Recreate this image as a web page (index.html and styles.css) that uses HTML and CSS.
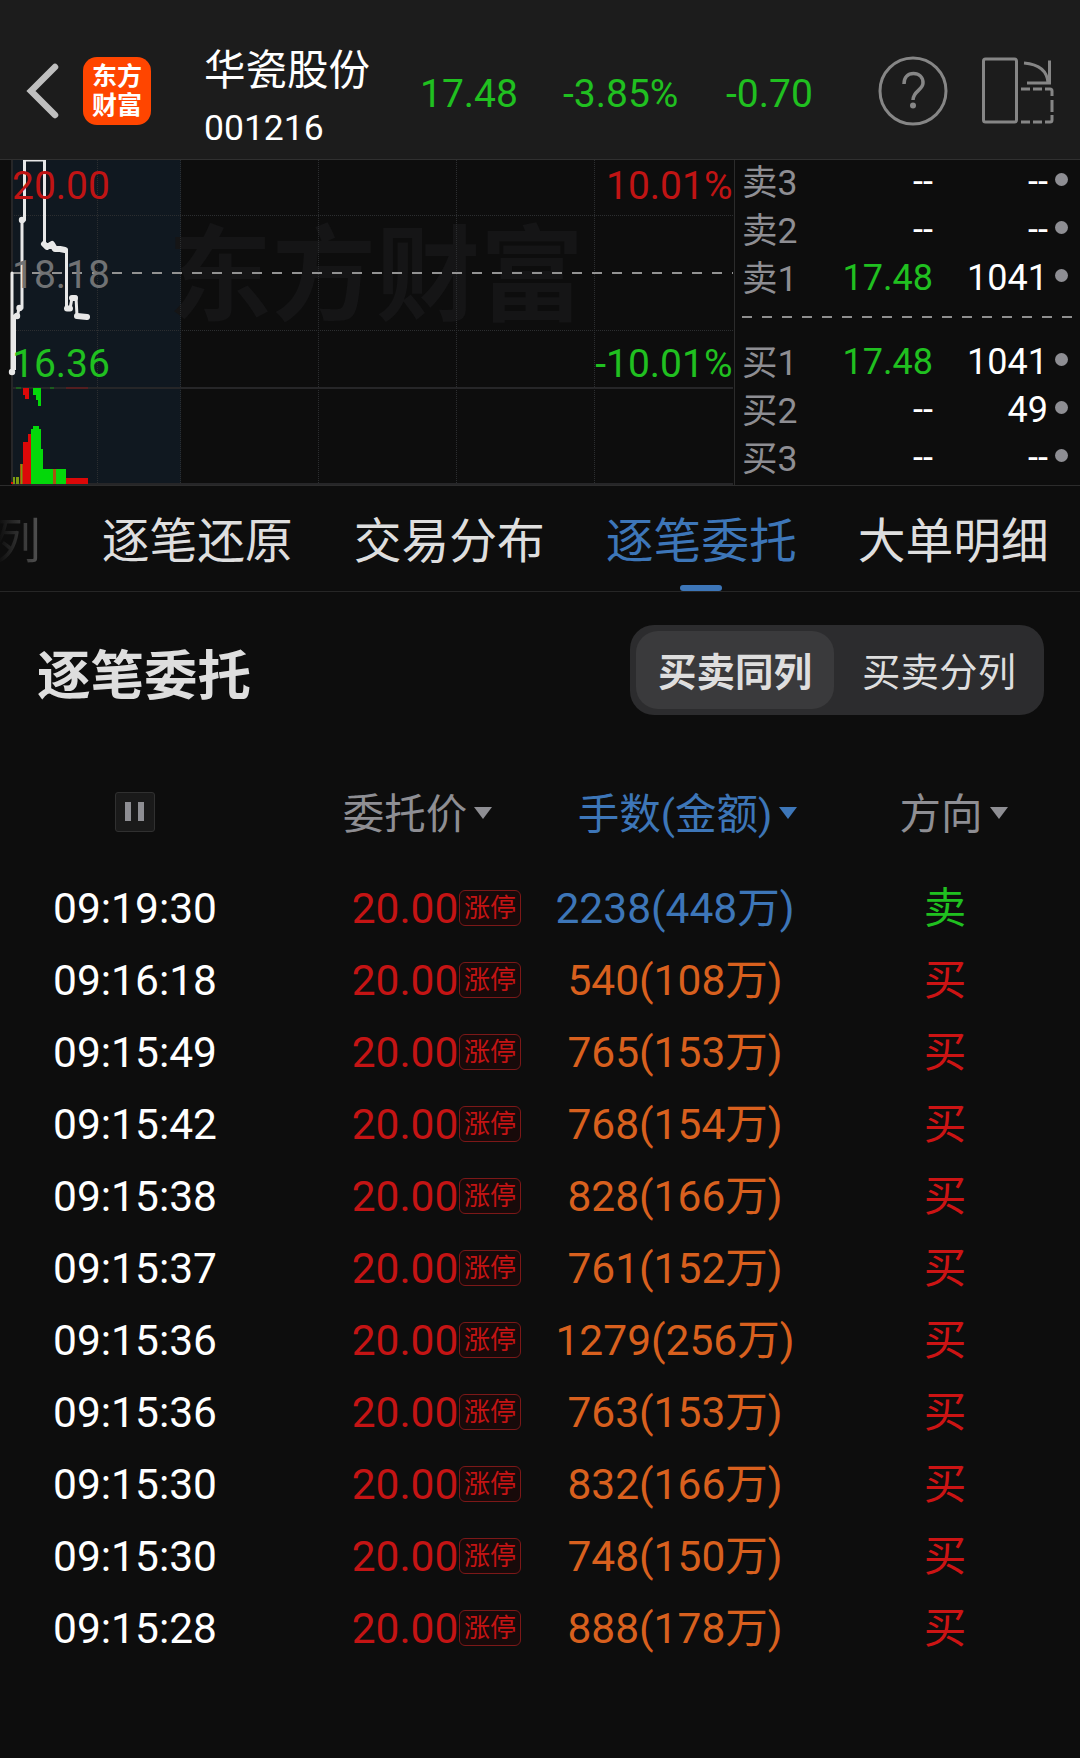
FILE: index.html
```html
<!DOCTYPE html>
<html lang="zh-CN">
<head>
    <meta charset="UTF-8">
    <meta name="viewport" content="width=device-width, initial-scale=1.0">
    <title>华瓷股份 001216</title>
    <link rel="stylesheet" href="styles.css">
</head>
<body>
    <header class="topbar">
        <svg class="back" width="40" height="64" viewBox="0 0 40 64">
            <polyline points="31,8 7,32 31,56" fill="none" stroke="#bfbfbf" stroke-width="6.500" stroke-linecap="round"/>
        </svg>
        <div class="logo"><span>东方</span><span>财富</span></div>
        <div class="stock">
            <h1>华瓷股份</h1>
            <p>001216</p>
        </div>
        <div class="quote green">
            <span class="last">17.48</span>
            <span class="pct">-3.85%</span>
            <span class="diff">-0.70</span>
        </div>
        <svg class="help" width="70" height="70" viewBox="0 0 70 70" fill="none" stroke="#868686">
            <circle cx="35" cy="35" r="33" stroke-width="3"/>
            <path d="M26 28C26 21 30 17.500 35.500 17.500S45 21 45 27C45 34 35 35 35 44" stroke-width="3.500"/>
            <circle cx="35" cy="49.500" r="3" fill="#868686" stroke="none"/>
        </svg>
        <svg class="rotate" width="74" height="70" viewBox="0 0 74 70" fill="none" stroke="#868686" stroke-width="3">
            <rect x="2.500" y="3" width="33" height="63" rx="2"/>
            <path d="M43 7Q66 9 67 27"/>
            <path d="M68.500 4.500V27H46"/>
            <path d="M40 33h9M52 33h9M64 33h5q2 0 2 2v5M71 44v12M71 59v5q0 2-2 2h-5M61 66h-9M49 66h-9"/>
        </svg>
    </header>

    <section class="market">
        <svg class="chart" width="734" height="325" viewBox="0 160 734 325">
            <rect x="12" y="160" width="169" height="325" fill="#101820"/>
            <text class="watermark" x="168" y="313">东方财富</text>
            <!-- grid -->
            <g stroke="#2c2e30" stroke-dasharray="1 1">
                <path d="M97.500 160V484M180.500 160V484M318.500 160V484M456.500 160V484M594.500 160V484"/>
                <path d="M12 215.500H733M12 330.500H733"/>
            </g>
            <path d="M12 160V484M12 388H733M12 484H733" stroke="#262628" stroke-width="2"/>
            <path d="M12 273H733" stroke="#929292" stroke-width="2" stroke-dasharray="10 10"/>
            <!-- price line -->
            <path d="M12 273V372L14 367V316H17.500L19 308H22V220H24.500V160H44.500V244L47 247L50 244L54 250L58 248L66.500 250V309H70L72 298L76 297L77 316H82L88 317" fill="none" stroke="#e8e8e8" stroke-width="3" stroke-linejoin="round" stroke-linecap="round"/>
            <path d="M13.500 318V370" stroke="#e8e8e8" stroke-width="5"/>
            <path d="M44 244L47 247L52 244L55 249L60 249L65 250M67 308.500H70M72 298H75M77 316L87 317" fill="none" stroke="#e8e8e8" stroke-width="6" stroke-linejoin="round" stroke-linecap="round"/>
            <g fill="#e8e8e8">
                <circle cx="12" cy="372" r="3.200"/>
                <circle cx="17" cy="316" r="3.200"/>
                <circle cx="19.500" cy="308" r="3.200"/>
                <circle cx="22" cy="220" r="3.200"/>
            </g>
            <!-- volume -->
            <g fill="#dc0808">
                <path d="M11 482h2v-5h2v7h-4zM20 464h3v20h-3zM23 442h5v-8h3v50h-8zM66 478h22v6h-22z"/>
                <path d="M23 388h6v11h-4v-4h-2z"/>
                <path d="M66 387.500h22v1H66z" opacity="0.500"/>
            </g>
            <g fill="#04d80a">
                <path d="M31 429h2v-3h6v3h2v20h2v20h23v15H31z"/>
                <path d="M33 388h8v18h-3v-6h-2v-5h-3z"/>
                <path d="M16 387.500h5v1h-5zM50 387.500h4v1h-4z" opacity="0.600"/>
            </g>
            <path d="M13 477h2v7h-2zM16 477h3v7h-3zM20.500 464h2v20h-2z" fill="#7a9a10"/>
            <path d="M53 469h3v15h-3z" fill="#a85410"/>
            <g class="axis">
                <text x="12" y="199" fill="#c01414">20.00</text>
                <text x="12" y="288" fill="#707274">18.18</text>
                <text x="12" y="377" fill="#20c020">16.36</text>
                <text x="732.500" y="199" fill="#c01414" text-anchor="end">10.01%</text>
                <text x="732.500" y="377" fill="#20c020" text-anchor="end">-10.01%</text>
            </g>
        </svg>

        <div class="book">
            <div class="level"><span>卖3</span><b>--</b><b>--</b><i></i></div>
            <div class="level"><span>卖2</span><b>--</b><b>--</b><i></i></div>
            <div class="level"><span>卖1</span><b class="green">17.48</b><b>1041</b><i></i></div>
            <div class="split"></div>
            <div class="level"><span>买1</span><b class="green">17.48</b><b>1041</b><i></i></div>
            <div class="level"><span>买2</span><b>--</b><b>49</b><i></i></div>
            <div class="level"><span>买3</span><b>--</b><b>--</b><i></i></div>
        </div>
    </section>

    <nav class="tabs">
        <a class="faded">列</a>
        <a>逐笔还原</a>
        <a>交易分布</a>
        <a class="active">逐笔委托</a>
        <a>大单明细</a>
    </nav>

    <div class="title-row">
        <h2>逐笔委托</h2>
        <div class="switch">
            <span class="on">买卖同列</span>
            <span>买卖分列</span>
        </div>
    </div>

    <div class="orders">
        <div class="row head">
            <div><span class="pause"></span></div>
            <div class="sort">委托价</div>
            <div class="sort blue">手数(金额)</div>
            <div class="sort dir">方向</div>
        </div>
        <div class="row"><div>09:19:30</div><div class="price">20.00<em>涨停</em></div><div class="blue">2238(448万)</div><div class="green">卖</div></div>
        <div class="row"><div>09:16:18</div><div class="price">20.00<em>涨停</em></div><div class="orange">540(108万)</div><div class="red">买</div></div>
        <div class="row"><div>09:15:49</div><div class="price">20.00<em>涨停</em></div><div class="orange">765(153万)</div><div class="red">买</div></div>
        <div class="row"><div>09:15:42</div><div class="price">20.00<em>涨停</em></div><div class="orange">768(154万)</div><div class="red">买</div></div>
        <div class="row"><div>09:15:38</div><div class="price">20.00<em>涨停</em></div><div class="orange">828(166万)</div><div class="red">买</div></div>
        <div class="row"><div>09:15:37</div><div class="price">20.00<em>涨停</em></div><div class="orange">761(152万)</div><div class="red">买</div></div>
        <div class="row"><div>09:15:36</div><div class="price">20.00<em>涨停</em></div><div class="orange">1279(256万)</div><div class="red">买</div></div>
        <div class="row"><div>09:15:36</div><div class="price">20.00<em>涨停</em></div><div class="orange">763(153万)</div><div class="red">买</div></div>
        <div class="row"><div>09:15:30</div><div class="price">20.00<em>涨停</em></div><div class="orange">832(166万)</div><div class="red">买</div></div>
        <div class="row"><div>09:15:30</div><div class="price">20.00<em>涨停</em></div><div class="orange">748(150万)</div><div class="red">买</div></div>
        <div class="row"><div>09:15:28</div><div class="price">20.00<em>涨停</em></div><div class="orange">888(178万)</div><div class="red">买</div></div>
    </div>
</body>
</html>
```

FILE: styles.css
```css
* {
    box-sizing: border-box;
}
body {
    margin: 0;
    height: 1758px;
    overflow: hidden;
    background: #0d0d0d;
    color: #fff;
    font-family: Roboto, "Noto Sans CJK SC", sans-serif;
}
h1, h2, p {
    margin: 0;
    font-weight: 400;
}
.green {
    color: #20c020;
}
.red {
    color: #cc1414;
}
.blue {
    color: #3d76b8;
}
.orange {
    color: #d8601e;
}

/* top bar */
.topbar {
    display: flex;
    height: 160px;
    padding-top: 42px;
    background: #1c1c1c;
    border-bottom: 1px solid #303030;
}
.back {
    margin: 17px 0 0 24px;
}
.logo {
    display: flex;
    flex-direction: column;
    justify-content: center;
    align-items: center;
    width: 68px;
    height: 68px;
    margin: 15px 0 0 19px;
    border-radius: 14px;
    background: #ff4500;
    font-size: 25px;
    font-weight: 700;
    line-height: 29px;
}
.stock {
    width: 216px;
    margin-left: 53px;
}
.stock h1 {
    font-size: 41.500px;
    line-height: 58px;
}
.stock p {
    font-size: 35.500px;
    line-height: 56px;
}
.quote {
    display: flex;
    width: 462px;
    font-size: 39px;
    line-height: 104px;
}
.last {
    width: 143px;
}
.pct {
    width: 163px;
}
.help {
    flex: none;
    margin: 14px 0 0 -4px;
}
.rotate {
    flex: none;
    margin: 14px 0 0 33px;
}

/* chart and order book */
.market {
    display: flex;
    height: 326px;
    border-bottom: 1px solid #2c2c2c;
}
.chart {
    flex: none;
    display: block;
}
.watermark {
    font-size: 104px;
    font-weight: 700;
    fill: #151516;
}
.axis {
    font-size: 39px;
}
.book {
    flex: 1;
    border-left: 1px solid #2c2c2c;
}
.level {
    display: flex;
    align-items: center;
    height: 48px;
    padding-left: 7px;
    font-size: 36px;
}
.level:first-child {
    margin-top: -3px;
}
.level span {
    width: 60px;
    margin-top: -4px;
    color: #8e8e93;
    font-size: 35.500px;
}
.level b {
    width: 131px;
    margin-top: 2px;
    font-weight: 400;
    text-align: right;
}
.level b + b {
    width: 115px;
}
.level i {
    width: 13px;
    height: 13px;
    margin: -4px 0 0 7px;
    border-radius: 50%;
    background: #8e8e93;
}
.split {
    width: 330px;
    height: 2px;
    margin: 15px 0 19px 7px;
    background: repeating-linear-gradient(90deg, #8e8e8e 0 10px, transparent 10px 20px);
}

/* tabs */
.tabs {
    display: flex;
    gap: 61px;
    height: 106px;
    padding-left: 102px;
    border-bottom: 1px solid #262626;
    color: #dedede;
    font-size: 47.750px;
    line-height: 112px;
    white-space: nowrap;
}
.tabs a {
    position: relative;
    flex: none;
}
.tabs .faded {
    margin-left: -109px;
    background: linear-gradient(90deg, #0d0d0d 10%, #555);
    background-clip: text;
    color: transparent;
}
.tabs .active {
    color: #3d76b8;
}
.tabs .active::after {
    content: "";
    position: absolute;
    left: 74px;
    bottom: 0;
    width: 42px;
    height: 6px;
    border-radius: 3px;
    background: #3d76b8;
}

/* title */
.title-row {
    display: flex;
    justify-content: space-between;
    align-items: center;
    margin: 33px 36px 0 37px;
    height: 90px;
}
.title-row h2 {
    color: #dedede;
    font-size: 53.500px;
    font-weight: 700;
    margin-top: 2px;
}
.switch {
    display: flex;
    width: 414px;
    height: 90px;
    padding: 6px;
    border-radius: 24px;
    background: #2c2c2e;
    color: #dedede;
    font-size: 38.500px;
    line-height: 83px;
    text-align: center;
}
.switch span {
    width: 204px;
    height: 78px;
    padding-left: 6px;
}
.switch .on {
    width: 198px;
    padding: 0;
    border-radius: 22px;
    background: #3a3a3c;
    font-weight: 700;
}

/* order list */
.orders {
    padding-top: 58px;
}
.row {
    display: grid;
    grid-template-columns: repeat(4, 270px);
    height: 72px;
    font-size: 42.500px;
    line-height: 73px;
    text-align: center;
}
.row > div {
    position: relative;
}
.head {
    height: 99px;
    color: #8e8e93;
    font-size: 41.500px;
    line-height: 83px;
}
.pause {
    display: inline-block;
    width: 40px;
    height: 40px;
    border: 1px solid #303030;
    border-radius: 3px;
    background:
        linear-gradient(#8e8e93, #8e8e93) 9px 9px / 6px 19px no-repeat,
        linear-gradient(#8e8e93, #8e8e93) 22px 9px / 6px 19px no-repeat,
        #1a1a1a;
    vertical-align: top;
    margin-top: 19px;
}
.sort::after {
    content: "";
    display: inline-block;
    margin: 0 -25px 0 7px;
    border: 9px solid transparent;
    border-top: 12px solid currentColor;
    border-bottom: 0;
    vertical-align: 10px;
}
.dir {
    left: -4px;
}
.price {
    color: #c41414;
}
.price em {
    position: absolute;
    left: 189px;
    top: 18px;
    width: 62px;
    height: 36px;
    border: 1px solid #7c1818;
    border-radius: 6px;
    background: #180a0a;
    font-size: 26px;
    font-style: normal;
    line-height: 35px;
}
```
